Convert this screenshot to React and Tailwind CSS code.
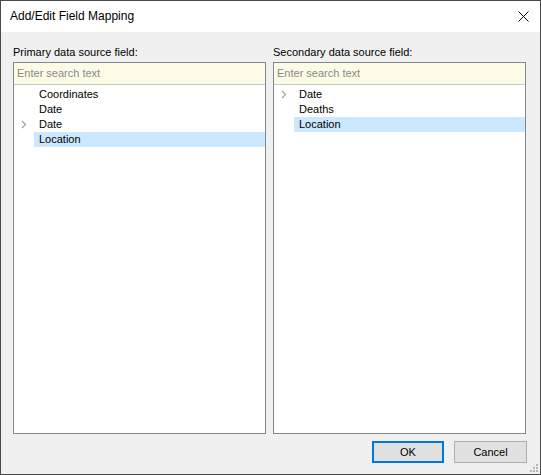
import React from "react";

const Chevron = () => (
  <svg width="6" height="9" viewBox="0 0 6 9" className="block">
    <path d="M1 1 L4.5 4.5 L1 8" fill="none" stroke="#a6a6a6" strokeWidth="1.3" />
  </svg>
);

const FieldPanel = ({ label, items }) => (
  <div className="flex flex-col w-[253px]">
    <div className="h-[19px] pt-[2px] leading-[15px] text-[#000]">{label}</div>
    <div className="flex flex-col h-[372px] border border-[#828790] bg-white">
      <div className="h-[22px] shrink-0 flex items-center px-[3px] bg-[#fcfce6] border-b border-[#c8c8c8] text-[#8a8a8a] leading-[15px]">
        Enter search text
      </div>
      <div className="flex flex-col pt-[2px]">
        {items.map((it, i) => (
          <div key={i} className="flex h-[15px] items-center leading-[15px]">
            <div className="w-[20px] h-full flex items-center pl-[7px]">
              {it.expand && <Chevron />}
            </div>
            <div
              className={
                "flex-1 h-full leading-[15px] pl-[5px] " +
                (it.selected ? "bg-[#cce8ff]" : "")
              }
            >
              {it.name}
            </div>
          </div>
        ))}
      </div>
    </div>
  </div>
);

const App = () => {
  return (
    <div
      className="w-[541px] h-[475px] flex flex-col bg-[#f0f0f0] border border-[#4a4a4a] text-[11px] text-black"
      style={{ fontFamily: '"Liberation Sans", Arial, sans-serif' }}
    >
      <div className="h-[31px] shrink-0 bg-white flex items-center justify-between pl-[9px] pr-[11px]">
        <span className="text-[12px] leading-[15px]">Add/Edit Field Mapping</span>
        <svg width="11" height="11" viewBox="0 0 11 11">
          <path d="M0.5 0.5 L10.5 10.5 M10.5 0.5 L0.5 10.5" stroke="#000" strokeWidth="1" />
        </svg>
      </div>
      <div className="flex-1 flex flex-col pl-[12px] pt-[11px]">
        <div className="flex gap-[7px]">
          <FieldPanel
            label="Primary data source field:"
            items={[
              { name: "Coordinates" },
              { name: "Date" },
              { name: "Date", expand: true },
              { name: "Location", selected: true },
            ]}
          />
          <FieldPanel
            label="Secondary data source field:"
            items={[
              { name: "Date", expand: true },
              { name: "Deaths" },
              { name: "Location", selected: true },
            ]}
          />
        </div>
        <div className="flex justify-end gap-[10px] pt-[7px] pr-[13px]">
          <button className="w-[72px] h-[22px] bg-[#e1e1e1] border-2 border-[#0078d7] flex items-center justify-center leading-[15px]">
            OK
          </button>
          <button className="w-[73px] h-[22px] bg-[#e1e1e1] border border-[#adadad] flex items-center justify-center leading-[15px]">
            Cancel
          </button>
        </div>
        <div className="flex justify-end pr-[2px] pt-[1px]">
          <svg width="8" height="8" viewBox="0 0 8 8">
            <rect x="6" y="0" width="2" height="2" fill="#b5b5b5" />
            <rect x="3" y="3" width="2" height="2" fill="#b5b5b5" />
            <rect x="6" y="3" width="2" height="2" fill="#b5b5b5" />
            <rect x="0" y="6" width="2" height="2" fill="#b5b5b5" />
            <rect x="3" y="6" width="2" height="2" fill="#b5b5b5" />
            <rect x="6" y="6" width="2" height="2" fill="#b5b5b5" />
          </svg>
        </div>
      </div>
    </div>
  );
};

export default App;
